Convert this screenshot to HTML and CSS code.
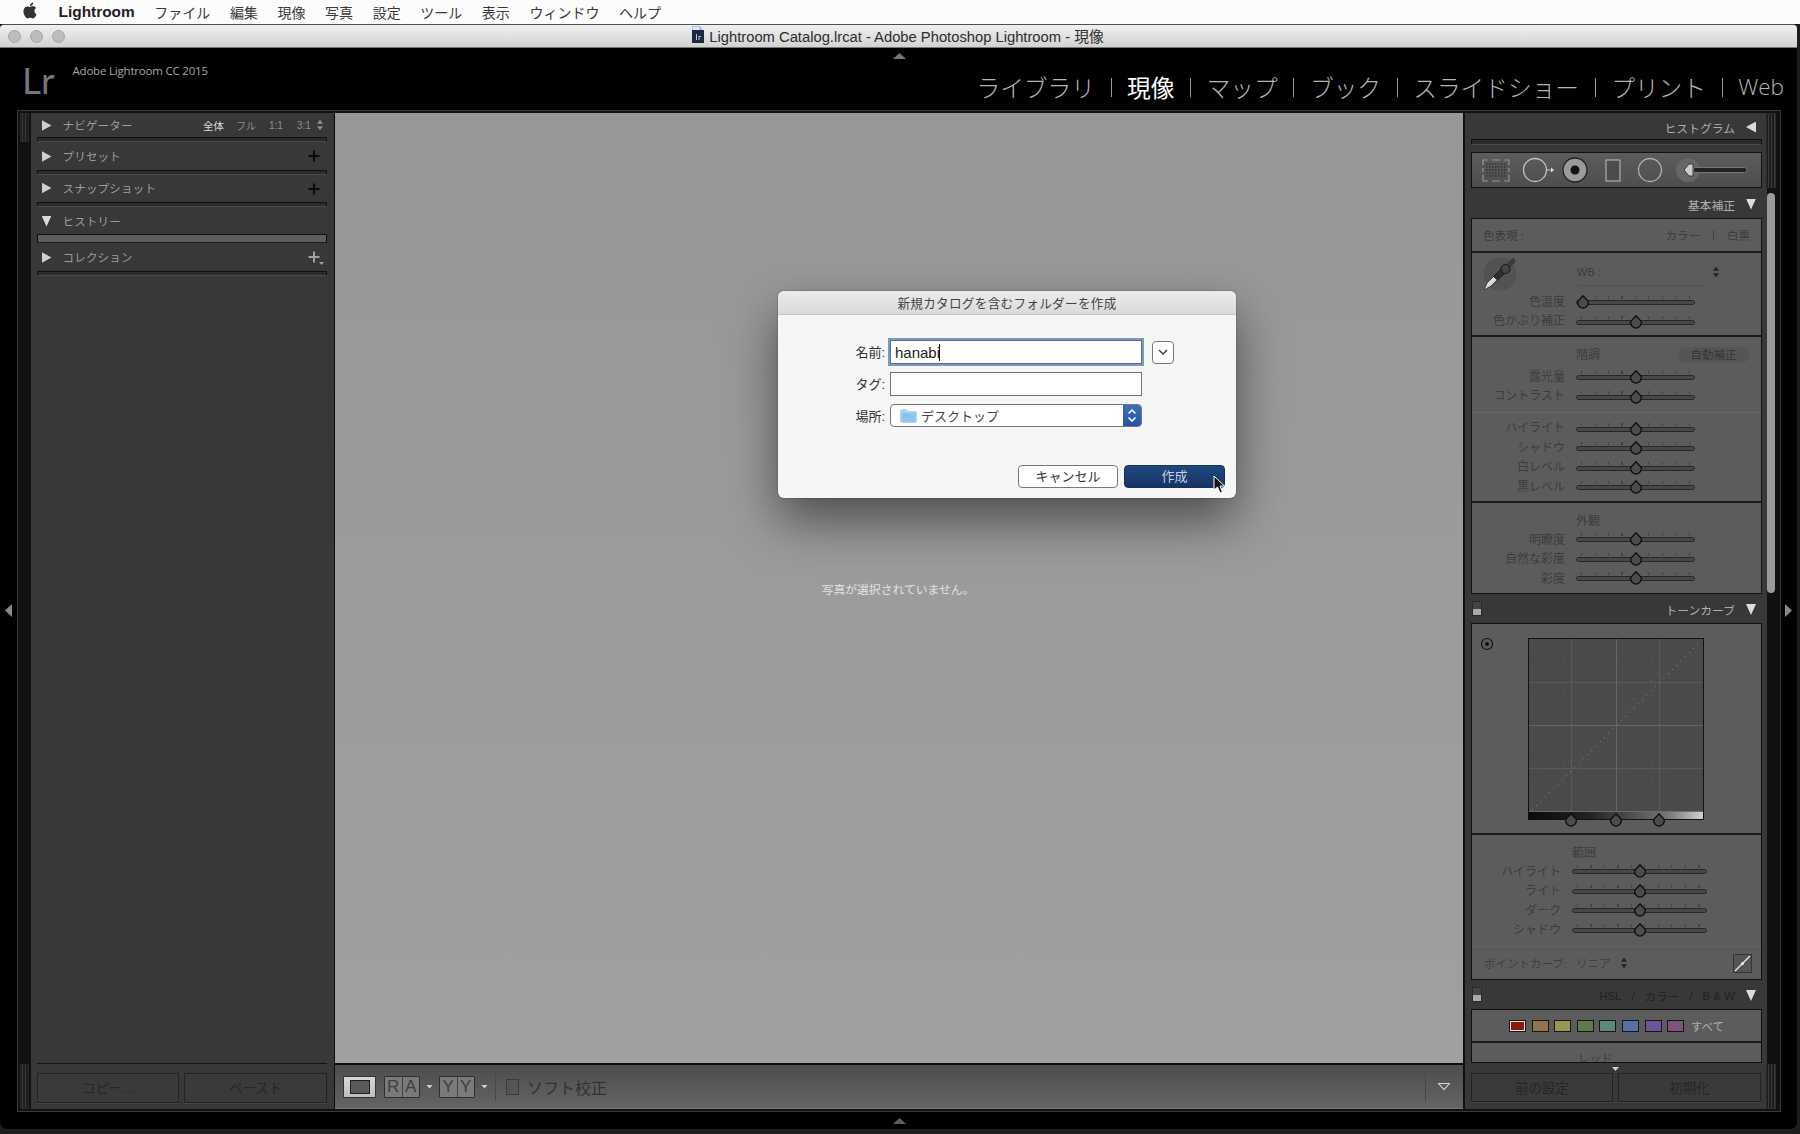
FILE: index.html
```html
<!DOCTYPE html>
<html lang="ja">
<head>
<meta charset="utf-8">
<title>Lightroom</title>
<link rel="stylesheet" href="styles.css">
</head>
<body>
<svg class="defs" width="0" height="0" aria-hidden="true">
  <symbol id="knob" viewBox="0 0 14 14"><path d="M7 .8 L12.200 6.200 A5.800 5.800 0 0 1 7 13.200 A5.800 5.800 0 0 1 1.800 6.200 Z" fill="#4c4c4c" stroke="#0c0c0c" stroke-width="1.300"/></symbol>
  <symbol id="updown" viewBox="0 0 8 14"><path d="M4 1 L7.500 5.500 H.5 Z M4 13 L7.500 8.500 H.5 Z" fill="currentColor"/></symbol>
  <symbol id="plus" viewBox="0 0 12 12"><path d="M5 .5h2v4.500h4.500v2H7v4.500H5V7H.5V5H5z" fill="currentColor"/></symbol>
</svg>

<header class="menubar">
  <svg class="apple" viewBox="0 0 24 24"><path d="M12.152 6.896c-.948 0-2.415-1.078-3.96-1.04-2.04.027-3.91 1.183-4.961 3.014-2.117 3.675-.546 9.103 1.519 12.09 1.013 1.454 2.208 3.09 3.792 3.039 1.52-.065 2.09-.987 3.935-.987 1.831 0 2.35.987 3.96.948 1.637-.026 2.676-1.48 3.676-2.948 1.156-1.688 1.636-3.325 1.662-3.415-.039-.013-3.182-1.221-3.22-4.857-.026-3.04 2.48-4.494 2.597-4.559-1.429-2.09-3.623-2.324-4.39-2.376-2-.156-3.675 1.09-4.61 1.09zM15.53 3.83c.843-1.012 1.4-2.427 1.245-3.83-1.207.052-2.662.805-3.532 1.818-.78.896-1.454 2.338-1.273 3.714 1.338.104 2.715-.688 3.559-1.701"/></svg>
  <b class="app-name">Lightroom</b>
  <span>ファイル</span><span>編集</span><span>現像</span><span>写真</span><span>設定</span><span>ツール</span><span>表示</span><span>ウィンドウ</span><span>ヘルプ</span>
</header>

<div class="window">
  <div class="titlebar">
    <div class="lights"><i></i><i></i><i></i></div>
    <div class="doc-title">
      <svg class="doc-icon" width="14" height="18" viewBox="0 0 14 18"><path d="M1 5 V1 H9 L11 3 V5Z" fill="#a9c6e2"/><path d="M2 2 H8 V5 H2Z" fill="#dfe9f3"/><rect x="1" y="5" width="12" height="13" fill="#1b2a40"/><path d="M5 9 V15 H6 V9Z M7.500 11 V15 H8.500 V12 H10 V11Z" fill="#b9c6d6"/></svg>
      <span>Lightroom Catalog.lrcat - Adobe Photoshop Lightroom - 現像</span>
    </div>
  </div>

  <div class="topbar">
    <span class="collapse-top"></span>
    <div class="brand">
      <span class="lr">Lr</span>
      <span class="product">Adobe Lightroom CC 2015</span>
    </div>
    <nav class="modules">
      <span>ライブラリ</span><i></i><span class="active">現像</span><i></i><span>マップ</span><i></i><span>ブック</span><i></i><span>スライドショー</span><i></i><span>プリント</span><i></i><span class="web">Web</span>
    </nav>
  </div>

  <div class="stage-wrap">
    <span class="side-tri left"></span>
    <span class="side-tri right"></span>
    <main class="stage">
      <div class="rail">
        <div class="grip top"></div>
        <div class="grip bottom"></div>
      </div>

      <aside class="left-panel">
        <section class="lsec s1">
          <div class="lhead"><span class="tri-r"></span><span class="ltitle">ナビゲーター</span>
            <div class="zooms"><b>全体</b><span>フル</span><span>1:1</span><span>3:1</span><svg width="8" height="12"><use href="#updown"/></svg></div>
          </div>
          <div class="lbar"></div>
        </section>
        <section class="lsec s2">
          <div class="lhead"><span class="tri-r"></span><span class="ltitle">プリセット</span><svg class="plus" width="12" height="12"><use href="#plus"/></svg></div>
          <div class="lbar"></div>
        </section>
        <section class="lsec s3">
          <div class="lhead"><span class="tri-r"></span><span class="ltitle">スナップショット</span><svg class="plus" width="12" height="12"><use href="#plus"/></svg></div>
          <div class="lbar"></div>
        </section>
        <section class="lsec s4">
          <div class="lhead"><span class="tri-d"></span><span class="ltitle">ヒストリー</span></div>
          <div class="lbar open"></div>
        </section>
        <section class="lsec s5">
          <div class="lhead"><span class="tri-r"></span><span class="ltitle">コレクション</span><svg class="plus light" width="12" height="12"><use href="#plus"/></svg><span class="plus-caret"></span></div>
          <div class="lbar"></div>
        </section>
        <div class="grow"></div>
        <footer class="panel-foot left-foot">
          <button class="ghost">コピー...</button>
          <button class="ghost">ペースト</button>
        </footer>
      </aside>

      <div class="center">
        <div class="viewer">
          <p class="no-photo">写真が選択されていません。</p>
          <div class="dialog">
            <div class="dlg-title">新規カタログを含むフォルダーを作成</div>
            <div class="dlg-form">
              <label>名前:</label>
              <div class="field focus">hanabi<span class="caret"></span></div>
              <div class="mini"><svg width="10" height="6" viewBox="0 0 10 6"><path d="M1 1 L5 5 L9 1" fill="none" stroke="#333" stroke-width="1.300"/></svg></div>
              <label>タグ:</label>
              <div class="field"></div>
              <span></span>
              <label>場所:</label>
              <div class="select">
                <svg class="folder" width="17" height="14" viewBox="0 0 17 14"><path d="M0 2 Q0 0 2 0 H6 L8 2 H15 Q17 2 17 4 V12 Q17 14 15 14 H2 Q0 14 0 12Z" fill="#a9d6f5"/><rect x="1.500" y="4" width="14" height="8.500" fill="#8cc4ec"/></svg>
                <span class="sel-text">デスクトップ</span>
                <span class="sel-arrow"><svg width="10" height="15" viewBox="0 0 10 15"><path d="M1.500 5.500 L5 2 L8.500 5.500 M1.500 9.500 L5 13 L8.500 9.500" fill="none" stroke="#fff" stroke-width="1.500"/></svg></span>
              </div>
            </div>
            <div class="dlg-actions">
              <button class="btn">キャンセル</button>
              <button class="btn primary">作成</button>
            </div>
            <svg class="cursor" width="12" height="19" viewBox="0 0 12 19"><path d="M1 1 V15 L4.500 12 L7 18 L9.500 17 L7 11 H11.500 Z" fill="#111" stroke="#fff" stroke-width="1"/></svg>
          </div>
        </div>
        <div class="toolbar">
          <span class="loupe"><i></i></span>
          <span class="pair"><em>R</em><em>A</em></span><span class="mini-tri"></span>
          <span class="pair"><em>Y</em><em>Y</em></span><span class="mini-tri"></span>
          <span class="tsep"></span>
          <span class="check"></span>
          <span class="soft">ソフト校正</span>
          <span class="grow"></span>
          <span class="tsep"></span>
          <span class="drop"></span>
        </div>
      </div>

      <aside class="right-panel">
        <div class="rhead h1"><span>ヒストグラム</span><span class="tri-l"></span></div>
        <div class="lbar rbar"></div>
        <div class="tools">
          <svg width="290" height="36" viewBox="0 0 290 36">
            <path d="M15 12 H35 M15 15 H35 M15 18 H35 M15 21 H35 M15 24 H35" fill="none" stroke="#363636" stroke-width="1.500" stroke-dasharray="1.500 1.500"/>
            <path d="M12 13 V8 H17 M21 8 H29 M33 8 H38 V13 M12 23 V29 H17 M21 29 H29 M33 29 H38 V23 M12 16 V20 M38 16 V20" fill="none" stroke="#969696" stroke-width="1.200"/>
            <circle cx="64" cy="18" r="11.500" fill="none" stroke="#c0c0c0" stroke-width="1.300"/>
            <path d="M76 18 H80" stroke="#c0c0c0"/><path d="M80 15.500 L83 18 L80 20.500Z" fill="#ddd"/>
            <circle cx="104" cy="18" r="12" fill="#9a9a9a" stroke="#222" stroke-width="1.300"/>
            <circle cx="104" cy="18" r="4.500" fill="#111"/>
            <rect x="135" y="8" width="14" height="21" fill="#4c4c4c" stroke="#c0c0c0"/>
            <circle cx="179" cy="18" r="11.500" fill="none" stroke="#b0b0b0" stroke-width="1.300"/>
            <circle cx="217" cy="18" r="12" fill="#666"/>
            <path d="M213 18 L218 12 H222 V24 H218Z" fill="#ccc" stroke="#222" stroke-width=".800"/>
            <rect x="222" y="15.500" width="54" height="5" rx="2.500" fill="#222" stroke="#777"/>
          </svg>
        </div>
        <div class="rhead h2"><span>基本補正</span><span class="tri-d"></span></div>

        <section class="box basic">
          <div class="treat"><span>色表現 :</span><span class="grow"></span><span>カラー</span><i></i><span>白黒</span></div>
          <div class="wb">
            <svg class="dropper" width="36" height="36" viewBox="0 0 36 36">
              <circle cx="18" cy="18" r="16.500" fill="#525252"/>
              <path d="M2 34 L5 27 L12 20 L15.500 23.500 L9 30 Z" fill="#d8d8d8" stroke="#222" stroke-width=".700"/>
              <path d="M11.500 20.500 L20 12 L24 16 L15.500 24 Z" fill="#2e2e2e" stroke="#1a1a1a"/>
              <path d="M25 11 L31 5" stroke="#3a3a3a" stroke-width="5" stroke-linecap="round"/>
              <circle cx="23.500" cy="13" r="4.500" fill="#444" stroke="#1a1a1a"/>
            </svg>
            <div class="wb-line"><span>WB :</span><svg width="8" height="12"><use href="#updown"/></svg></div>
            <div class="sl"><label>色温度</label><div class="track"><svg class="knob k-min"><use href="#knob"/></svg></div></div>
            <div class="sl"><label>色かぶり補正</label><div class="track"><svg class="knob"><use href="#knob"/></svg></div></div>
          </div>
          <div class="tone">
            <div class="subhead"><span>階調</span><span class="auto">自動補正</span></div>
            <div class="sl"><label>露光量</label><div class="track"><svg class="knob"><use href="#knob"/></svg></div></div>
            <div class="sl"><label>コントラスト</label><div class="track"><svg class="knob"><use href="#knob"/></svg></div></div>
            <div class="thin"></div>
            <div class="sl"><label>ハイライト</label><div class="track"><svg class="knob"><use href="#knob"/></svg></div></div>
            <div class="sl"><label>シャドウ</label><div class="track"><svg class="knob"><use href="#knob"/></svg></div></div>
            <div class="sl"><label>白レベル</label><div class="track"><svg class="knob"><use href="#knob"/></svg></div></div>
            <div class="sl"><label>黒レベル</label><div class="track"><svg class="knob"><use href="#knob"/></svg></div></div>
          </div>
          <div class="look">
            <div class="subhead"><span>外観</span></div>
            <div class="sl"><label>明瞭度</label><div class="track"><svg class="knob"><use href="#knob"/></svg></div></div>
            <div class="sl"><label>自然な彩度</label><div class="track"><svg class="knob"><use href="#knob"/></svg></div></div>
            <div class="sl"><label>彩度</label><div class="track"><svg class="knob"><use href="#knob"/></svg></div></div>
          </div>
        </section>

        <div class="rhead h3"><span class="solo"></span><span>トーンカーブ</span><span class="tri-d"></span></div>

        <section class="box curve">
          <div class="curve-top">
            <svg class="target" width="14" height="14" viewBox="0 0 14 14"><circle cx="7" cy="7" r="5.500" fill="none" stroke="#111" stroke-width="1.200"/><circle cx="7" cy="7" r="2" fill="#111"/></svg>
            <svg class="graph" width="176" height="190" viewBox="0 0 176 190">
              <defs>
                <linearGradient id="ramp"><stop offset="0" stop-color="#0a0a0a"/><stop offset=".35" stop-color="#222"/><stop offset=".8" stop-color="#777"/><stop offset="1" stop-color="#d0d0d0"/></linearGradient>
                <pattern id="fine" width="8.800" height="8.700" patternUnits="userSpaceOnUse"><path d="M0 0 V8.700 M0 0 H8.800" stroke="#505050"/></pattern>
              </defs>
              <rect x=".500" y=".500" width="175" height="181" fill="#4a4a4a" stroke="#111"/>
              <rect x="1" y="1" width="174" height="173" fill="url(#fine)"/>
              <path d="M43.500 1 V174 M131.500 1 V174 M1 44.500 H175 M1 130.500 H175" stroke="#5a5a5a"/>
              <path d="M88.500 1 V174 M1 87.500 H175" stroke="#666"/>
              <path d="M4 172 L172 4" stroke="#909090" stroke-dasharray="1 5"/>
              <rect x="1" y="173" width="174" height="1" fill="#6a6a6a"/>
              <rect x="1" y="174" width="174" height="7" fill="url(#ramp)"/>
              <use href="#knob" x="36" y="175" width="14" height="14"/>
              <use href="#knob" x="81" y="175" width="14" height="14"/>
              <use href="#knob" x="124" y="175" width="14" height="14"/>
            </svg>
          </div>
          <div class="region">
            <div class="subhead range"><span>範囲</span></div>
            <div class="sl wide"><label>ハイライト</label><div class="track"><svg class="knob"><use href="#knob"/></svg></div></div>
            <div class="sl wide"><label>ライト</label><div class="track"><svg class="knob"><use href="#knob"/></svg></div></div>
            <div class="sl wide"><label>ダーク</label><div class="track"><svg class="knob"><use href="#knob"/></svg></div></div>
            <div class="sl wide"><label>シャドウ</label><div class="track"><svg class="knob"><use href="#knob"/></svg></div></div>
          </div>
          <div class="pointcurve">
            <span>ポイントカーブ:</span><span>リニア</span><svg width="8" height="12"><use href="#updown"/></svg>
            <span class="grow"></span>
            <svg class="curve-btn" width="19" height="19" viewBox="0 0 19 19"><rect x=".500" y=".500" width="18" height="18" fill="#555" stroke="#333"/><path d="M2 17 L17 2" stroke="#eee" stroke-width="1.300"/><circle cx="9.500" cy="9.500" r="1.500" fill="#eee"/></svg>
          </div>
        </section>

        <div class="rhead h4"><span class="solo"></span><span>HSL</span><span class="slash">/</span><span>カラー</span><span class="slash">/</span><span>B &amp; W</span><span class="tri-d"></span></div>

        <section class="box hsl">
          <div class="swatches">
            <i class="c1"></i><i class="c2"></i><i class="c3"></i><i class="c4"></i><i class="c5"></i><i class="c6"></i><i class="c7"></i><i class="c8"></i>
            <span>すべて</span>
          </div>
          <div class="red-row"><span>レッド</span></div>
        </section>

        <footer class="panel-foot right-foot">
          <span class="foot-tri"></span>
          <button class="ghost">前の設定</button>
          <button class="ghost">初期化</button>
        </footer>
      </aside>

      <div class="rail right-rail">
        <div class="grip top tall"></div>
        <div class="thumb"></div>
        <div class="grip bottom"></div>
      </div>
    </main>
  </div>
  <span class="collapse-bottom"></span>
</div>
</body>
</html>
```

FILE: styles.css
```css
* { box-sizing: border-box; }
html, body { margin: 0; padding: 0; }
body {
  width: 1800px; height: 1134px; overflow: hidden; background: #1d1d1d;
  font-family: "Liberation Sans", "Noto Sans CJK JP", sans-serif;
  position: relative;
}
.defs { position: absolute; }
.grow { flex: 1; }
button { font-family: inherit; padding: 0; margin: 0; }

/* menu bar */
.menubar {
  height: 24px; background: #fcfcfc; display: flex; align-items: center; gap: 19.600px;
  padding-left: 22px; font-size: 14px; color: #3a3a3a; white-space: nowrap;
}
.apple { width: 16px; height: 17px; fill: #333; margin-top: -3px; margin-right: 1px; }
.app-name { font-size: 15.400px; color: #222; }

/* window */
.window {
  position: relative; width: 1797px; height: 1105px; background: #000;
  border-radius: 0 0 7px 7px; display: flex; flex-direction: column;
}
.titlebar {
  height: 24px; background: linear-gradient(#f0f0f0, #d2d2d2);
  border-top: 1px solid #4e4e4e; border-bottom: 1px solid #777; border-radius: 4px 4px 0 0;
  position: relative; display: flex; align-items: center; justify-content: center;
}
.lights { position: absolute; left: 8px; top: 5px; display: flex; gap: 9px; }
.lights i { width: 13px; height: 13px; border-radius: 50%; background: #bdbdbd; border: 1px solid #a4a4a4; }
.doc-title { display: flex; align-items: center; gap: 4px; font-size: 14.750px; color: #2d2d2d; margin-left: -2px; padding-bottom: 2px; }
.doc-icon { margin-top: -2px; }

.topbar { height: 62px; position: relative; flex: none; }
.collapse-top {
  position: absolute; left: 893px; top: 5px; width: 13px; height: 6px;
  background: #777; clip-path: polygon(50% 0, 100% 100%, 0 100%);
}
.brand { position: absolute; left: 22px; top: 0; display: flex; gap: 18px; }
.lr { font: 400 37px/1 "Lato", sans-serif; color: #767676; margin-top: 13px; }
.product { font: 11.500px/1 "Open Sans", sans-serif; color: #a6a6a6; margin-top: 17px; letter-spacing: -.2px; }
.modules {
  position: absolute; right: 13px; top: 21px; display: flex; align-items: center; gap: 15.600px;
  font: 300 23.700px/36px "Noto Sans CJK JP", sans-serif; color: #b4b4b4; white-space: nowrap;
}
.modules i { width: 1px; height: 19px; background: #9a9a9a; }
.modules .active { color: #fff; font-weight: 400; }
.modules .web { font-family: "Open Sans", sans-serif; font-size: 22.500px; }

/* stage */
.stage-wrap { flex: none; height: 1002px; position: relative; }
.side-tri { position: absolute; top: 494px; width: 7px; height: 13px; background: #8a8a8a; }
.side-tri.left { left: 5px; clip-path: polygon(100% 0, 100% 100%, 0 50%); }
.side-tri.right { left: 1785px; clip-path: polygon(0 0, 0 100%, 100% 50%); }
.stage {
  margin-left: 17px; width: 1764px; height: 1002px; border: 1px solid #3a3a3a; padding: 2px;
  display: grid; grid-template-columns: 9px 303px 1130px 303px 10px;
  background: #111;
}
.rail { display: flex; flex-direction: column; justify-content: space-between; position: relative; }
.grip {
  background: repeating-linear-gradient(90deg, #1c1c1c 0 1px, #3c3c3c 1px 2px, #1c1c1c 2px 3px);
  border: 1px solid #2a2a2a;
}
.grip.top { height: 29px; }
.grip.bottom { height: 45px; }
.grip.tall { height: 75px; }
.left-panel { background: #383838; display: flex; flex-direction: column; width: 303px; margin-left: 2px; margin-right: -2px; }

.lsec { padding: 0 7px 0 5.500px; }
.lhead {
  display: flex; align-items: center; font-size: 11.500px; color: #9c9c9c; padding-left: 5px; position: relative;
}
.s1 .lhead { height: 24px; }
.s2 .lhead { height: 28px; }
.s3 .lhead { height: 27px; padding-bottom: 2px; }
.s4 .lhead { height: 27px; }
.s5 .lhead { height: 28px; }
.ltitle { margin-left: 11px; letter-spacing: .2px; }
.lhead .tri-r, .lhead .tri-d { margin-top: 1px; }
.tri-r { width: 10px; height: 11px; background: #cfcfcf; clip-path: polygon(0 0, 100% 50%, 0 100%); flex: none; }
.tri-d { width: 10px; height: 11px; background: #dcdcdc; clip-path: polygon(0 0, 100% 0, 50% 100%); flex: none; }
.tri-l { width: 10px; height: 11px; background: #dcdcdc; clip-path: polygon(100% 0, 100% 100%, 0 50%); flex: none; }
.lbar { height: 5px; background: #2b2b2b; border: 1px solid #0f0f0f; border-bottom-color: #4a4a4a; border-radius: 1px; }
.lbar.open { height: 9px; background: #5e5e5e; border-bottom-color: #1b1b1b; }
.zooms {
  position: absolute; left: 166.500px; top: 0; height: 24px; display: grid;
  grid-template-columns: 33px 33px 28px 22px 8px; align-items: center; font-size: 10px; color: #8f8f8f;
}
.zooms svg { margin-left: -3px; }
.zooms b { color: #dcdcdc; font-weight: 400; font-size: 10.500px; }
.plus { position: absolute; right: 7px; top: 50%; margin-top: -6px; color: #0b0b0b; }
.plus.light { color: #a0a0a0; }
.plus-caret { position: absolute; right: 3px; top: 19px; width: 5px; height: 3px; background: #a0a0a0; clip-path: polygon(0 0, 100% 0, 50% 100%); }

.panel-foot { height: 46px; flex: none; }
.left-foot {
  margin: 0 7px 0 5.500px; border-top: 1px solid #141414; padding-top: 9px;
  display: grid; grid-template-columns: 1fr 1fr; column-gap: 5px; grid-template-rows: 30px;
}
.ghost {
  background: #3a3a3a; border: 1px solid #232323; color: #262626; font-size: 13.500px; height: 30px;
  padding-bottom: 2px; box-shadow: 0 1px 0 #454545;
}

/* centre */
.center { display: flex; flex-direction: column; border-left: 1px solid #0d0d0d; border-right: 1px solid #0d0d0d; width: 1130px; margin-left: 2px; margin-right: -2px; }
.viewer {
  flex: none; height: 950px; background: linear-gradient(#979797, #a0a0a0); position: relative;
  display: flex; align-items: center; justify-content: center; padding-right: 2px;
}
.no-photo { margin: 0; font-size: 11.800px; color: #e2e2e2; }
.toolbar {
  height: 46px; flex: none; border-top: 2px solid #0d0d0d;
  background: linear-gradient(#4d4d4d, #646464); display: flex; align-items: center; padding-left: 8px;
  border-bottom: 1px solid #777;
}
.loupe {
  width: 33px; height: 22px; background: linear-gradient(#d8d8d8, #bdbdbd); border: 1px solid #333; border-radius: 1px;
  display: flex; align-items: center; justify-content: center; margin-right: 8px;
}
.loupe i { width: 20px; height: 14px; background: #5a5a5a; border: 1px solid #1e1e1e; }
.pair { width: 36px; height: 22px; display: flex; border: 1px solid #2f2f2f; background: #7a7a7a; border-radius: 1px; }
.pair em { flex: 1; font: 17px/20px "Liberation Sans", sans-serif; color: #3e3e3e; text-align: center; font-style: normal; }
.pair em + em { border-left: 1px solid #444; }
.mini-tri { width: 7px; height: 4px; background: #d0d0d0; clip-path: polygon(0 0, 100% 0, 50% 100%); margin: 0 6px; }
.tsep { width: 1px; height: 29px; background: #484848; margin-left: 1px; }
.check { width: 13px; height: 16px; background: #555; border: 1px solid #3a3a3a; margin-left: 10px; }
.soft { font-size: 16px; color: #323232; margin-left: 8px; }
.drop {
  width: 14px; height: 8px; margin: 0 12px 0 11px; position: relative;
  background: #d4d4d4; clip-path: polygon(0 0, 100% 0, 50% 100%);
}
.drop::after {
  content: ""; position: absolute; left: 2.500px; top: 1.200px; width: 9px; height: 5px; background: #5a5a5a;
  clip-path: polygon(0 0, 100% 0, 50% 100%);
}

/* dialog */
.dialog {
  position: absolute; left: 443px; top: 178px; width: 458px; height: 207px; background: #f6f6f6;
  border-radius: 6px; box-shadow: 0 22px 50px rgba(0, 0, 0, .5), 0 0 2px rgba(0, 0, 0, .4);
  display: flex; flex-direction: column; font-size: 13px; color: #333;
}
.dlg-title {
  height: 24px; background: linear-gradient(#ececec, #dadada); border-bottom: 1px solid #c4c4c4;
  border-radius: 6px 6px 0 0; text-align: center; line-height: 27px; color: #444; font-size: 12.600px; letter-spacing: .3px;
}
.dlg-form {
  display: grid; grid-template-columns: 107px 252px 22px; column-gap: 5px; row-gap: 8px; grid-template-rows: 24px 24px 23px;
  padding-top: 25px; align-items: center;
}
.dlg-form .mini { margin-left: 5px; }
.dlg-form label { text-align: right; color: #333; padding-bottom: 1px; }
.field {
  height: 24px; background: #fff; border: 1px solid #777; font-size: 15px; line-height: 23px; padding-left: 4px; color: #222; display: flex;
}
.field.focus { box-shadow: 0 0 0 2px #8097bb; border-color: #54709c; }
.caret { width: 1px; height: 17px; background: #111; margin: 3px 0 0 -1px; }
.mini {
  width: 22px; height: 23px; border: 1px solid #777; border-radius: 4px; background: #fff; display: flex; align-items: center; justify-content: center;
}
.select {
  height: 23px; background: #fff; border: 1px solid #777; border-radius: 4px; display: flex; align-items: center; padding-left: 9px; position: relative; overflow: hidden;
}
.folder { flex: none; }
.sel-text { margin-left: 4px; color: #444; }
.sel-arrow {
  position: absolute; right: 0; top: 0; bottom: 0; width: 18px; background: linear-gradient(#3f6fb8, #2553a3);
  display: flex; align-items: center; justify-content: center;
}
.dlg-actions { display: flex; justify-content: flex-end; gap: 6px; padding-right: 11px; margin-top: 38px; }
.btn {
  width: 100px; height: 23px; border: 1px solid #777; border-radius: 4px; background: #fff; font-size: 13px; color: #333; padding-bottom: 2px;
}
.btn.primary { width: 101px; background: linear-gradient(#20487f, #153463); border-color: #14315c; color: #c7d0df; }
.cursor { position: absolute; left: 435px; top: 184px; }

/* right panel */
.right-panel { width: 302px; background: #383838; padding: 0 5px 0 6px; display: flex; flex-direction: column; margin-left: 3px; margin-right: -2px; position: relative; }
.rhead { display: flex; justify-content: flex-end; align-items: center; font-size: 11.800px; color: #aeaeae; padding: 2px 6px 0 0; flex: none; position: relative; }
.rhead .tri-d, .rhead .tri-l { margin-left: 11px; }
.h1 { height: 26px; }
.rbar { flex: none; height: 6px; }
.tools {
  margin-top: 7px; height: 36px; flex: none; background: linear-gradient(#5c5c5c, #4e4e4e); border: 1px solid #111; overflow: hidden;
}
.tools svg { display: block; margin: -1px; }
.h2 { height: 30px; }
.h3 { height: 29px; }
.h4 { height: 29px; color: #202020; font-size: 11.500px; }
.h4 .slash { margin: 0 10px; }
.solo {
  position: absolute; left: 1px; top: 7px; width: 10px; height: 15px; border: 1px solid #2a2a2a;
  background: linear-gradient(#444 50%, #aaa 50%);
}
.box { background: #5c5c5c; border: 1px solid #111; flex: none; color: #3d3d3d; font-size: 12px; }
.basic { height: 376px; }
.treat {
  height: 34px; display: flex; align-items: center; padding: 0 11px; border-bottom: 2px solid #1b1b1b; font-size: 11.500px;
}
.treat i { width: 1px; height: 11px; background: #444; margin: 0 13px; }
.wb { height: 84px; position: relative; border-bottom: 2px solid #1b1b1b; padding-top: 40px; }
.dropper { position: absolute; left: 10px; top: 3px; }
.wb-line {
  position: absolute; left: 105px; top: 9px; width: 128px; height: 24px; border-bottom: 1px solid #525252;
  display: flex; justify-content: space-between; align-items: center; font-size: 11px; padding-bottom: 3px; color: #3a3a3a;
}
.wb-line svg { color: #222; margin-right: -15px; }
.sl {
  display: grid; grid-template-columns: 92px 119px; column-gap: 11px; height: 19.500px; align-items: center;
  padding-left: 1px; font-size: 12px;
}
.sl label { text-align: right; white-space: nowrap; margin-top: -3px; }
.wb .sl label, .tone .sl label { margin-top: -5px; }
.sl.wide { grid-template-columns: 88px 135px; column-gap: 11px; }
.track {
  height: 5px; background: #484848; border: 1px solid #272727; border-radius: 3px; position: relative;
}
.track::before {
  content: ""; position: absolute; left: 4px; right: 4px; top: -5px; height: 3px;
  background: repeating-linear-gradient(90deg, #424242 0 1px, transparent 1px 13.500px);
}
.knob { position: absolute; left: 50%; top: -6px; width: 14px; height: 14px; margin-left: -7px; }
.knob.k-min { left: 6px; }
.tone { height: 166px; border-bottom: 2px solid #1b1b1b; }
.subhead { height: 32px; position: relative; padding: 9px 0 0 104px; font-size: 12px; }
.tone .subhead { height: 31px; padding-top: 8px; }
.auto {
  position: absolute; left: 206px; top: 10px; width: 71px; height: 16px; border-radius: 8px; background: #555; text-align: center; line-height: 16px; color: #363636; font-size: 11.500px;
}
.thin { height: 1px; background: #656565; margin: 5px 0 6.500px; }
.look { height: 90px; }
.look .subhead { height: 27px; padding-top: 8px; }
.curve { height: 357px; }
.curve-top { height: 211px; position: relative; border-bottom: 2px solid #1b1b1b; }
.target { position: absolute; left: 8px; top: 13px; }
.graph { position: absolute; left: 56px; top: 14px; overflow: visible; }
.region { height: 112px; border-bottom: 1px solid #646464; }
.range { height: 27px; padding: 8px 0 0 100px; }
.pointcurve {
  height: 32px; display: flex; align-items: center; padding: 0 9px 0 12px; gap: 9px; font-size: 11.500px; color: #3f3f3f;
}
.pointcurve > svg:first-of-type { color: #222; }
.curve-btn { display: block; }
.hsl { height: 54px; }
.swatches { height: 33px; display: flex; align-items: center; padding-left: 37px; gap: 5.600px; border-bottom: 2px solid #1b1b1b; }
.swatches i { width: 17px; height: 12px; border: 1px solid #161616; }
.swatches span { margin-left: 1px; font-size: 11.500px; color: #b0b0b0; }
.c1 { background: #8a1a10; outline: 1px solid #ddd; outline-offset: -2px; }
.c2 { background: #94724f; }
.c3 { background: #9a9755; }
.c4 { background: #5f7a4d; }
.c5 { background: #5b8a78; }
.c6 { background: #5670a8; }
.c7 { background: #6f5497; }
.c8 { background: #7e5478; }
.red-row { height: 19px; overflow: hidden; padding: 7px 0 0 106px; font-size: 11.500px; }
.right-foot { display: grid; grid-template-columns: 142px 143px; column-gap: 5px; padding-top: 10px; position: relative; grid-template-rows: 29px; }
.right-foot .ghost { height: 29px; }
.foot-tri { position: absolute; left: 141px; top: 4px; width: 7px; height: 4px; background: #cfcfcf; clip-path: polygon(0 0, 100% 0, 50% 100%); }

.right-rail { margin-left: 1px; width: 10px; justify-content: flex-start; }
.thumb { width: 8px; height: 400px; margin: 5px 0 0 1px; background: #9a9a9a; border-radius: 4px; }
.right-rail .grip.bottom { position: absolute; left: 0; right: 0; bottom: 0; }

.collapse-bottom {
  position: absolute; left: 893px; bottom: 5px; width: 13px; height: 6px; background: #5e5e5e;
  clip-path: polygon(50% 0, 100% 100%, 0 100%);
}
```
